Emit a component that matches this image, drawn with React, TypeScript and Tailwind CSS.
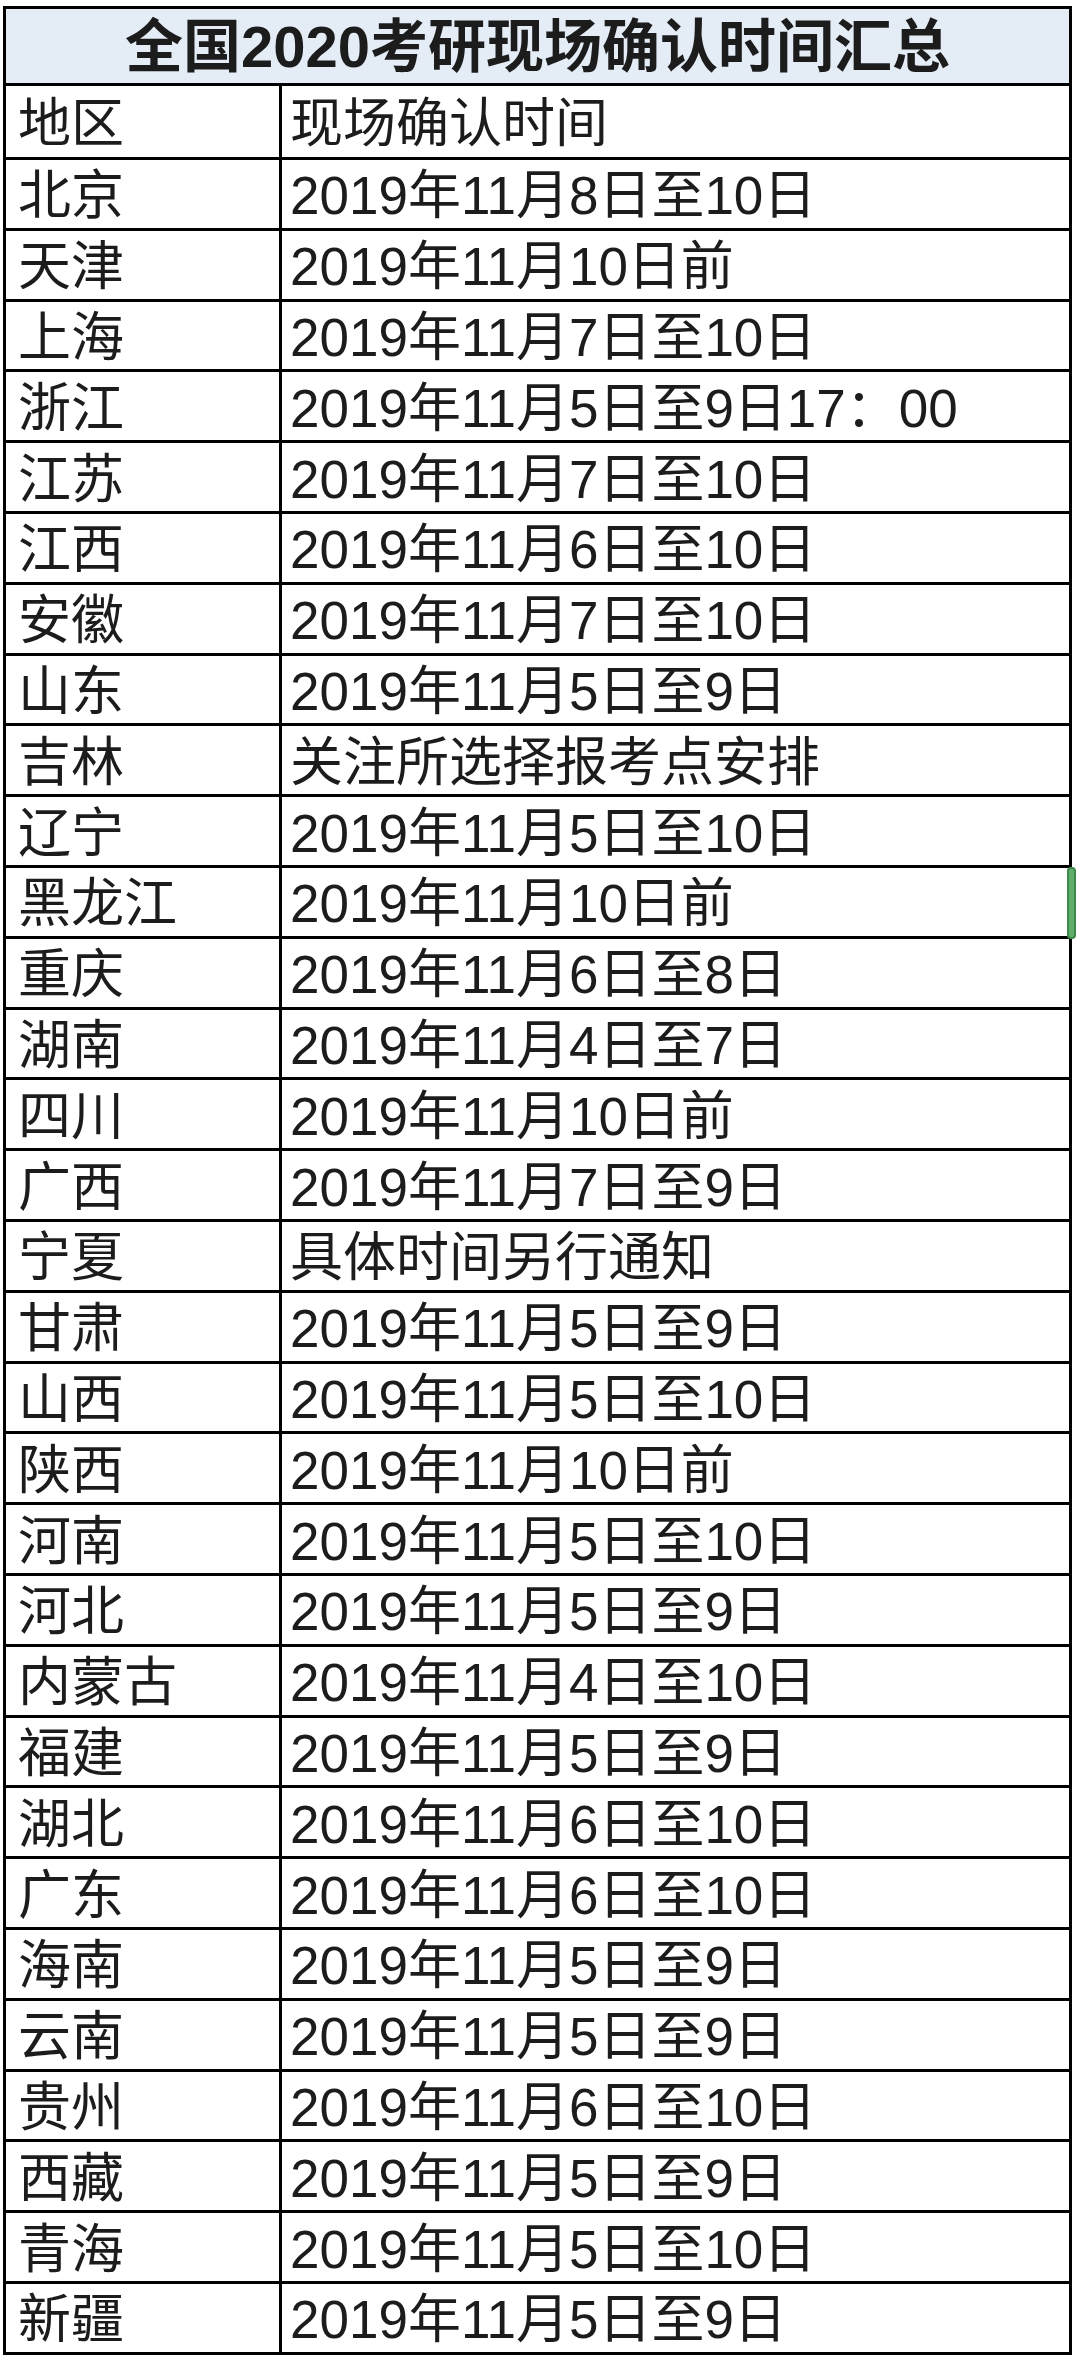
import React from "react";

const rows: [string, string][] = [
  ["北京", "2019年11月8日至10日"],
  ["天津", "2019年11月10日前"],
  ["上海", "2019年11月7日至10日"],
  ["浙江", "2019年11月5日至9日17：00"],
  ["江苏", "2019年11月7日至10日"],
  ["江西", "2019年11月6日至10日"],
  ["安徽", "2019年11月7日至10日"],
  ["山东", "2019年11月5日至9日"],
  ["吉林", "关注所选择报考点安排"],
  ["辽宁", "2019年11月5日至10日"],
  ["黑龙江", "2019年11月10日前"],
  ["重庆", "2019年11月6日至8日"],
  ["湖南", "2019年11月4日至7日"],
  ["四川", "2019年11月10日前"],
  ["广西", "2019年11月7日至9日"],
  ["宁夏", "具体时间另行通知"],
  ["甘肃", "2019年11月5日至9日"],
  ["山西", "2019年11月5日至10日"],
  ["陕西", "2019年11月10日前"],
  ["河南", "2019年11月5日至10日"],
  ["河北", "2019年11月5日至9日"],
  ["内蒙古", "2019年11月4日至10日"],
  ["福建", "2019年11月5日至9日"],
  ["湖北", "2019年11月6日至10日"],
  ["广东", "2019年11月6日至10日"],
  ["海南", "2019年11月5日至9日"],
  ["云南", "2019年11月5日至9日"],
  ["贵州", "2019年11月6日至10日"],
  ["西藏", "2019年11月5日至9日"],
  ["青海", "2019年11月5日至10日"],
  ["新疆", "2019年11月5日至9日"],
];

const font = {
  fontFamily: '"Liberation Sans", "Noto Sans CJK SC", sans-serif',
};

function Row({ a, b, h }: { a: string; b: string; h: string }) {
  return (
    <div className={`flex border-b-[3px] border-black ${h}`}>
      <div className="w-[276px] shrink-0 border-r-[3px] border-black flex items-center pl-[12px] pt-[4px]">
        {a}
      </div>
      <div className="flex-1 flex items-center pl-[8px] pt-[4px]">{b}</div>
    </div>
  );
}

export default function App() {
  return (
    <div className="w-[1080px] h-[2366px] bg-white pt-[6px] pl-[3px]" style={font}>
      <div className="relative w-[1069px] border-x-[3px] border-t-[3px] border-black text-[53px] leading-none text-[#1c1c1c]">
        <div className="h-[77px] border-b-[3px] border-black bg-[#e4ecf6] flex items-center justify-center font-bold text-[58px] pt-[2px]">
          全国2020考研现场确认时间汇总
        </div>
        <Row a="地区" b="现场确认时间" h="h-[74px]" />
        {rows.map(([a, b]) => (
          <Row key={a} a={a} b={b} h="h-[70.8px]" />
        ))}
        <div className="absolute right-[-7px] top-[858px] w-[9px] h-[72px] rounded-[4px] bg-[#5fae6c] border-[2px] border-[#3d8a4b]" />
      </div>
    </div>
  );
}
